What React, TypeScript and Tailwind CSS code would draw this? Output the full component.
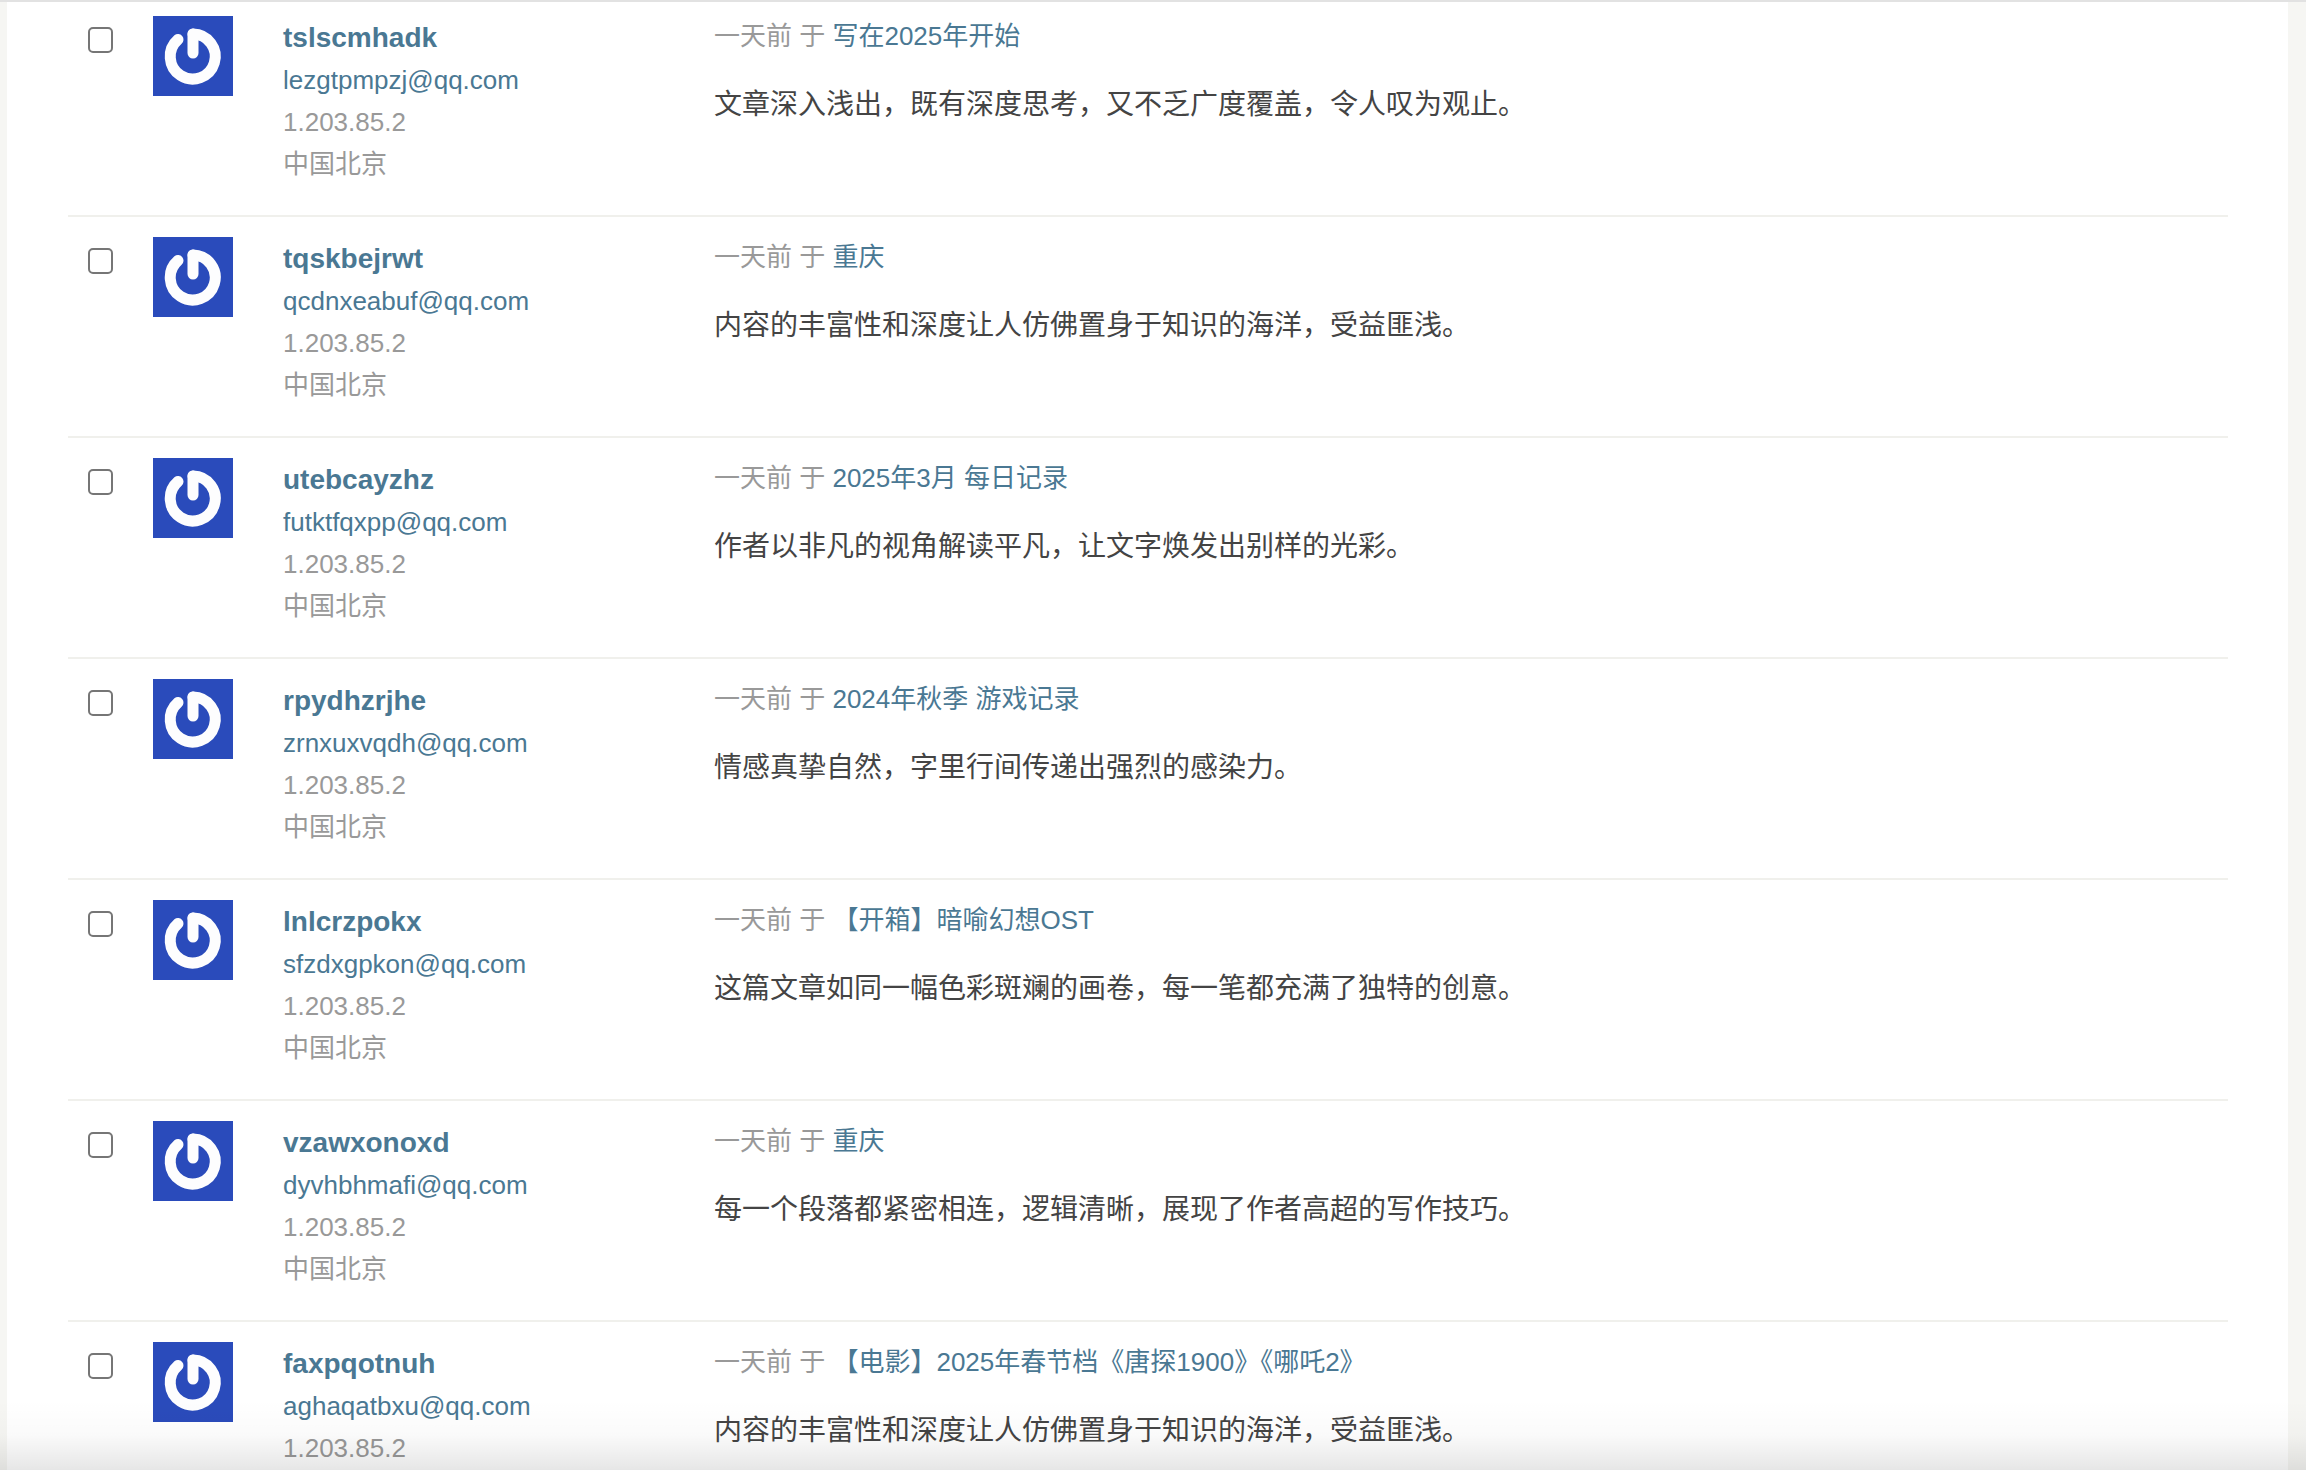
import React from "react";

type Comment = {
  name: string;
  email: string;
  post: string;
  text: string;
};

const comments: Comment[] = [
  {
    name: "tslscmhadk",
    email: "lezgtpmpzj@qq.com",
    post: "写在2025年开始",
    text: "文章深入浅出，既有深度思考，又不乏广度覆盖，令人叹为观止。",
  },
  {
    name: "tqskbejrwt",
    email: "qcdnxeabuf@qq.com",
    post: "重庆",
    text: "内容的丰富性和深度让人仿佛置身于知识的海洋，受益匪浅。",
  },
  {
    name: "utebcayzhz",
    email: "futktfqxpp@qq.com",
    post: "2025年3月 每日记录",
    text: "作者以非凡的视角解读平凡，让文字焕发出别样的光彩。",
  },
  {
    name: "rpydhzrjhe",
    email: "zrnxuxvqdh@qq.com",
    post: "2024年秋季 游戏记录",
    text: "情感真挚自然，字里行间传递出强烈的感染力。",
  },
  {
    name: "lnlcrzpokx",
    email: "sfzdxgpkon@qq.com",
    post: "【开箱】暗喻幻想OST",
    text: "这篇文章如同一幅色彩斑斓的画卷，每一笔都充满了独特的创意。",
  },
  {
    name: "vzawxonoxd",
    email: "dyvhbhmafi@qq.com",
    post: "重庆",
    text: "每一个段落都紧密相连，逻辑清晰，展现了作者高超的写作技巧。",
  },
  {
    name: "faxpqotnuh",
    email: "aghaqatbxu@qq.com",
    post: "【电影】2025年春节档《唐探1900》《哪吒2》",
    text: "内容的丰富性和深度让人仿佛置身于知识的海洋，受益匪浅。",
  },
];

const Avatar: React.FC = () => (
  <svg viewBox="0 0 80 80" className="w-20 h-20 shrink-0">
    <rect width="80" height="80" fill="#2a4bbb" />
    <g
      fill="none"
      stroke="#fdfdfe"
      strokeWidth="11"
      strokeLinecap="round"
      className="blur-[0.7px]"
    >
      <path d="M40 18 A22.5 22.5 0 1 1 25 23.5" />
      <path d="M40 18 V37" />
    </g>
  </svg>
);

const CommentRow: React.FC<{ comment: Comment }> = ({ comment }) => (
  <li className="flex h-[221px] pt-[20px] border-b-2 border-[#f0f0ec] first:h-[215px] first:pt-[14px]">
    <div className="w-[85px] pl-5 pt-[11px] shrink-0">
      <input
        type="checkbox"
        className="block appearance-none w-[25px] h-[26px] bg-white border-2 border-[#767676] rounded-[5px]"
      />
    </div>
    <Avatar />
    <div className="w-[431px] ml-[50px] shrink-0 text-[26px] leading-[42px] text-[#999]">
      <div className="text-[28px] leading-[43px] font-bold text-[#4a7893]">
        {comment.name}
      </div>
      <div className="text-[#4a7893]">{comment.email}</div>
      <div>1.203.85.2</div>
      <div>中国北京</div>
    </div>
    <div className="grow">
      <div className="-mt-px text-[26px] leading-[42px] text-[#999] whitespace-pre">
        一天前 于 <span className="text-[#4a7893]">{comment.post}</span>
      </div>
      <p className="mt-[27px] text-[28px] leading-[42px] text-[#444]">
        {comment.text}
      </p>
    </div>
  </li>
);

export default function App() {
  return (
    <div className="relative h-[1470px] overflow-hidden bg-[#f6f6f3] font-['Liberation_Sans','Noto_Sans_CJK_SC',sans-serif]">
      <div className="h-[2px] bg-[#e2e2e2]" />
      <main className="ml-[7px] mr-[18px] h-[1468px] bg-white pl-[61px] pr-[60px]">
        <ul>
          {comments.map(comment => (
            <CommentRow key={comment.name} comment={comment} />
          ))}
        </ul>
      </main>
      <div className="absolute inset-x-0 bottom-0 h-[70px] pointer-events-none bg-linear-to-b from-transparent via-[#00000005] to-[#00000019]" />
    </div>
  );
}
